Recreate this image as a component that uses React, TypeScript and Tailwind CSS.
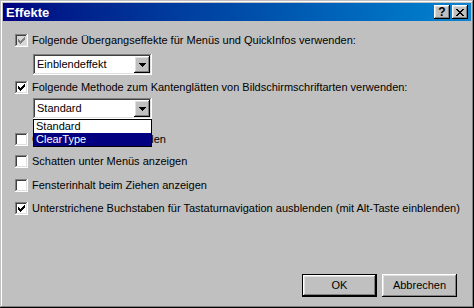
import React from 'react';

const raised =
  'shadow-[inset_-1px_-1px_#000000,inset_1px_1px_#ffffff,inset_-2px_-2px_#808080,inset_2px_2px_#dfdfdf]';
const sunken =
  'shadow-[inset_-1px_-1px_#ffffff,inset_1px_1px_#808080,inset_-2px_-2px_#dfdfdf,inset_2px_2px_#404040]';

function CheckMark({ color }: { color: string }) {
  return (
    <svg className="absolute left-[3px] top-[3px]" width="7" height="7" viewBox="0 0 7 7" shapeRendering="crispEdges">
      <path
        fill={color}
        d="M0 2h1v3h-1z M1 3h1v3h-1z M2 4h1v3h-1z M3 3h1v3h-1z M4 2h1v3h-1z M5 1h1v3h-1z M6 0h1v3h-1z"
      />
    </svg>
  );
}

function Row({ label, checked, disabled, mt }: { label: string; checked?: boolean; disabled?: boolean; mt: string }) {
  return (
    <div className={`flex items-center gap-[4px] h-[13px] ${mt}`}>
      <span
        className={`relative w-[13px] h-[13px] shrink-0 ${disabled ? 'bg-[#d8d8d8]' : 'bg-white'} ${sunken}`}
      >
        {checked && <CheckMark color={disabled ? '#808080' : '#000000'} />}
      </span>
      <span className="text-[11px] leading-[13px] whitespace-nowrap">{label}</span>
    </div>
  );
}

function Arrow() {
  return (
    <svg width="7" height="4" viewBox="0 0 7 4" shapeRendering="crispEdges">
      <path fill="#000" d="M0 0h7v1h-1v1h-1v1h-1v1h-1v-1h-1v-1h-1v-1h-1z" />
    </svg>
  );
}

function Combo({ value, mt, children }: { value: string; mt: string; children?: React.ReactNode }) {
  return (
    <div className={`relative ml-[18px] ${mt} w-[119px] h-[21px] bg-white p-[2px] flex items-center ${sunken}`}>
      <span className="flex-1 pl-[2px] text-[11px] leading-[13px]">{value}</span>
      <span className={`w-[16px] h-[17px] bg-[#c0c0c0] flex items-center justify-center ${raised}`}>
        <Arrow />
      </span>
      {children}
    </div>
  );
}

function Button({ label, isDefault }: { label: string; isDefault?: boolean }) {
  return (
    <div
      className={`w-[75px] h-[23px] flex items-center justify-center text-[11px] bg-[#c0c0c0] ${
        isDefault ? 'border border-black' : ''
      } ${raised}`}
    >
      {label}
    </div>
  );
}

export default function App() {
  return (
    <div
      className={`w-[474px] h-[308px] bg-[#c0c0c0] p-[3px] flex flex-col text-black font-['Liberation_Sans',Arial,sans-serif] shadow-[inset_-1px_-1px_#000000,inset_1px_1px_#c0c0c0,inset_-2px_-2px_#808080,inset_2px_2px_#ffffff]`}
    >
      {/* Titelleiste */}
      <div className="h-[18px] shrink-0 flex items-center bg-linear-to-r from-[#000080] to-[#1084d0] pl-[3px] pr-[3px]">
        <span className="flex-1 text-white font-bold text-[13px] leading-none">Effekte</span>
        <div className="flex gap-[2px]">
          <span className={`w-[16px] h-[14px] bg-[#c0c0c0] flex items-center justify-center text-[12px] font-bold leading-none ${raised}`}>
            ?
          </span>
          <span className={`w-[16px] h-[14px] bg-[#c0c0c0] flex items-center justify-center ${raised}`}>
            <svg width="8" height="7" viewBox="0 0 8 7" shapeRendering="crispEdges">
              <path
                fill="#000"
                d="M0 0h2v1h-2z M6 0h2v1h-2z M1 1h2v1h-2z M5 1h2v1h-2z M2 2h4v1h-4z M3 3h2v1h-2z M2 4h4v1h-4z M1 5h2v1h-2z M5 5h2v1h-2z M0 6h2v1h-2z M6 6h2v1h-2z"
              />
            </svg>
          </span>
        </div>
      </div>

      {/* Inhalt */}
      <div className="flex-1 flex flex-col pl-[12px]">
        <Row mt="mt-[13px]" checked disabled label="Folgende Übergangseffekte für Menüs und QuickInfos verwenden:" />
        <Combo mt="mt-[7px]" value="Einblendeffekt" />
        <Row mt="mt-[6px]" checked label="Folgende Methode zum Kantenglätten von Bildschirmschriftarten verwenden:" />
        <div className="relative z-10">
          <Combo mt="mt-[4px]" value="Standard">
            <div className="absolute left-0 top-full w-[119px] bg-white border border-black text-[11px] leading-[13px]">
              <div className="h-[13px] pl-[2px]">Standard</div>
              <div className="h-[13px] pl-[2px] bg-[#000080] text-white">ClearType</div>
            </div>
          </Combo>
        </div>
        <Row mt="mt-[14px]" label="Große Symbole verwenden" />
        <Row mt="mt-[9px]" label="Schatten unter Menüs anzeigen" />
        <Row mt="mt-[11px]" label="Fensterinhalt beim Ziehen anzeigen" />
        <Row mt="mt-[10px]" checked label="Unterstrichene Buchstaben für Tastaturnavigation ausblenden (mit Alt-Taste einblenden)" />

        <div className="mt-auto flex justify-end gap-[5px] pr-[14px] pb-[8px]">
          <Button label="OK" isDefault />
          <Button label="Abbrechen" />
        </div>
      </div>
    </div>
  );
}
